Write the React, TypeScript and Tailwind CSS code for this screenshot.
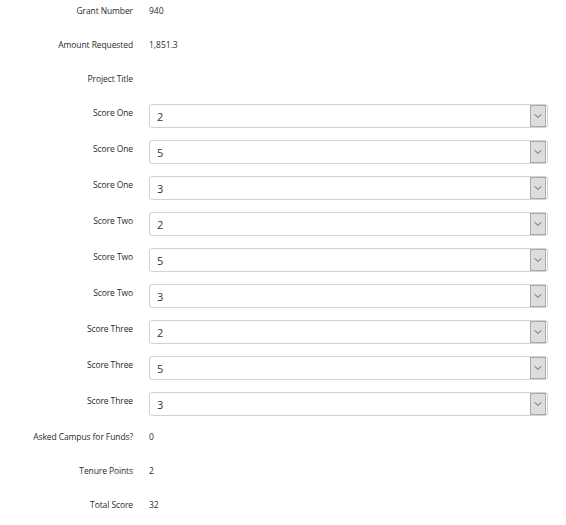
import { ChevronDown } from "lucide-react";

type Row =
  | { kind: "text"; label: string; value: string }
  | { kind: "select"; label: string; value: string };

const rows: Row[] = [
  { kind: "text", label: "Grant Number", value: "940" },
  { kind: "text", label: "Amount Requested", value: "1,851.3" },
  { kind: "text", label: "Project Title", value: "" },
  { kind: "select", label: "Score One", value: "2" },
  { kind: "select", label: "Score One", value: "5" },
  { kind: "select", label: "Score One", value: "3" },
  { kind: "select", label: "Score Two", value: "2" },
  { kind: "select", label: "Score Two", value: "5" },
  { kind: "select", label: "Score Two", value: "3" },
  { kind: "select", label: "Score Three", value: "2" },
  { kind: "select", label: "Score Three", value: "5" },
  { kind: "select", label: "Score Three", value: "3" },
  { kind: "text", label: "Asked Campus for Funds?", value: "0" },
  { kind: "text", label: "Tenure Points", value: "2" },
  { kind: "text", label: "Total Score", value: "32" },
];

function ScoreSelect({ value }: { value: string }) {
  return (
    <div className="mt-[1px] flex h-[24px] w-[399px] items-center rounded-[3px] border border-[#cfd3d9] bg-white pl-[7px] pr-[1px]">
      <span className="flex-1 text-[11px] leading-none text-[#333]">{value}</span>
      <div className="flex h-[22px] w-[16px] items-center justify-center border border-[#a8a8a8] bg-[#dedede]">
        <ChevronDown size={12} strokeWidth={1.5} className="text-[#333]" />
      </div>
    </div>
  );
}

export default function App() {
  return (
    <div className="min-h-[525px] w-[566px] bg-white pt-[1px] font-['Open_Sans',sans-serif] text-[#2b2b2b]">
      {rows.map((row, i) => (
        <div
          key={i}
          className={`flex items-start text-[8.5px] leading-[18px] ${row.kind === "select" ? "h-[36px]" : "h-[34px]"}`}
        >
          <div className="w-[133px] pt-[1px] text-right tracking-[-0.1px]">{row.label}</div>
          <div className="ml-[16px]">
            {row.kind === "select" ? (
              <ScoreSelect value={row.value} />
            ) : (
              <div className="pt-[1px]">{row.value}</div>
            )}
          </div>
        </div>
      ))}
    </div>
  );
}
